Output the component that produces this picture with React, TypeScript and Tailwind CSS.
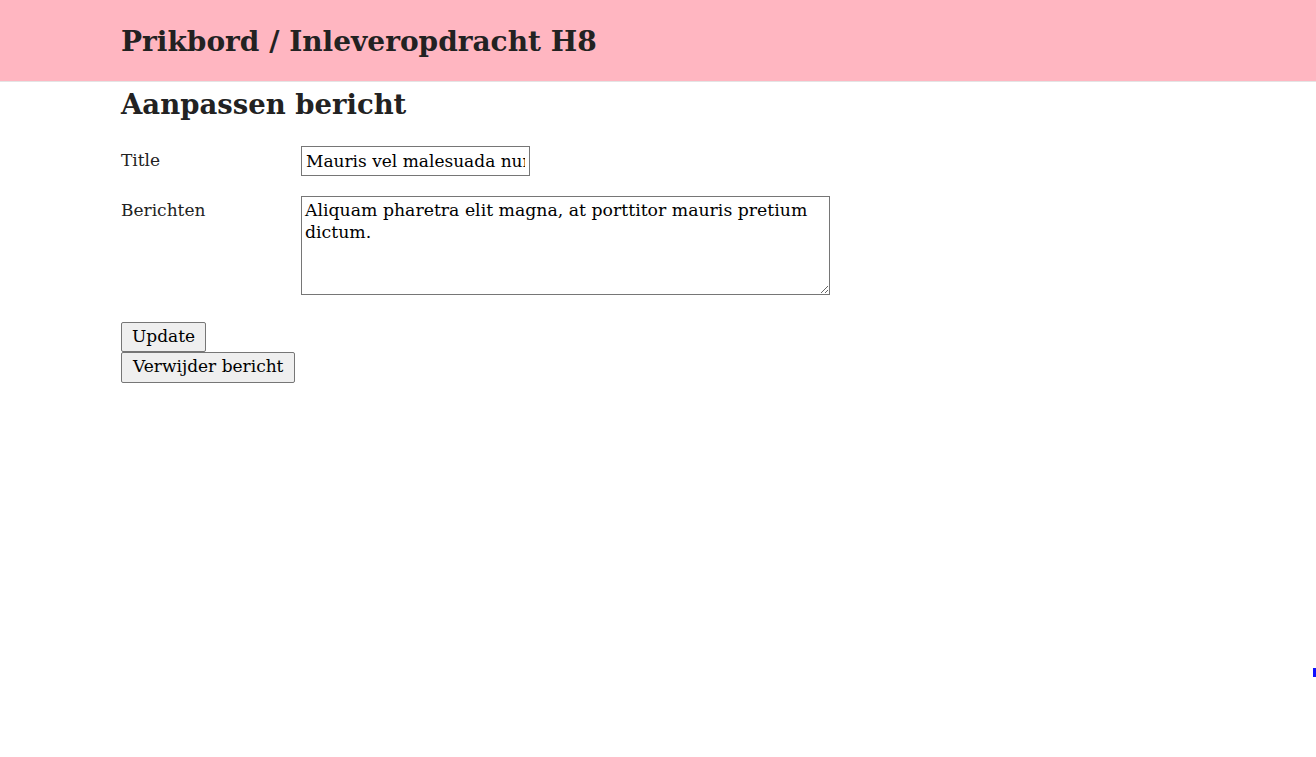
export default function App() {
  return (
    <div className="min-h-[757px] bg-white text-[#222] font-['DejaVu_Serif',Georgia,serif] relative overflow-hidden">
      <header className="h-[82px] bg-[#ffb6c1] border-b border-[#e4e4e4] flex items-center pl-[121px]">
        <h1 className="text-[28px] font-bold leading-none pt-[2px]">Prikbord / Inleveropdracht H8</h1>
      </header>

      <main className="pl-[121px]">
        <h2 className="text-[27.5px] font-bold leading-none pt-[9px]">Aanpassen bericht</h2>

        <form className="mt-[27px]" onSubmit={(e) => e.preventDefault()}>
          <div className="flex items-start">
            <label className="w-[180px] text-[17px] pt-[2px]">Title</label>
            <input
              type="text"
              defaultValue="Mauris vel malesuada nunc"
              className="w-[229px] h-[30px] border border-[#767676] px-[4px] text-[17px] text-black"
            />
          </div>

          <div className="flex items-start mt-[20px]">
            <label className="w-[180px] text-[17px] pt-[2px]">Berichten</label>
            <textarea
              defaultValue="Aliquam pharetra elit magna, at porttitor mauris pretium dictum."
              className="w-[529px] h-[99px] border border-[#767676] px-[3px] py-[2px] text-[17.3px] leading-[22px] text-black"
            />
          </div>

          <div className="mt-[27px] flex flex-col items-start">
            <button className="h-[30px] px-[10px] bg-[#efefef] border border-[#767676] rounded-[2px] text-[17px] text-black">
              Update
            </button>
            <button className="h-[31px] px-[11px] bg-[#efefef] border border-[#767676] rounded-[2px] text-[17px] text-black">
              Verwijder bericht
            </button>
          </div>
        </form>
      </main>

      <span className="absolute left-[1313px] top-[668px] w-[3px] h-[9px] bg-[#1010ff]" />
    </div>
  );
}
